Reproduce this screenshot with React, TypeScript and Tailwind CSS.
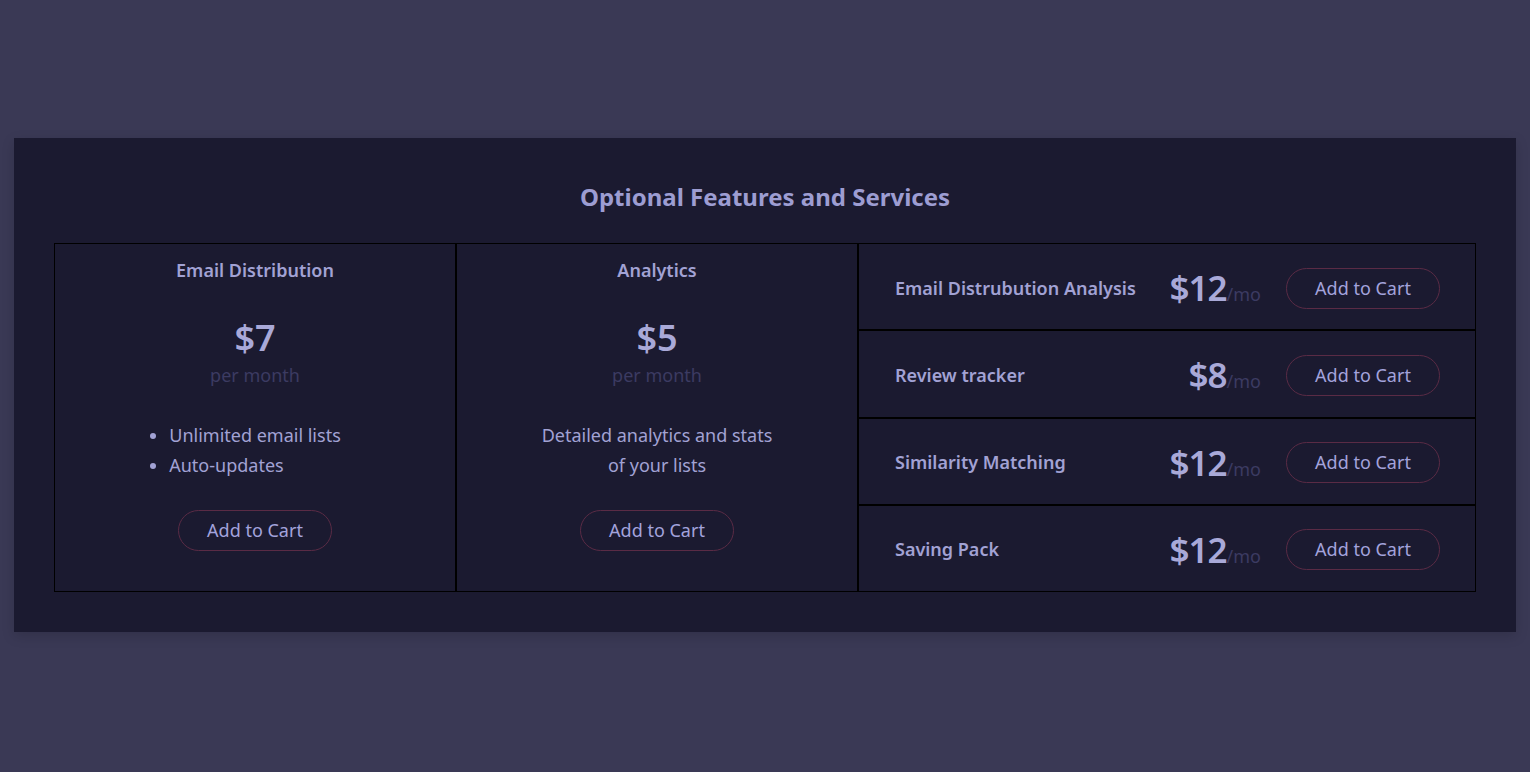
import React from "react";

const font = { fontFamily: '"Noto Sans", "Open Sans", sans-serif' };

function CartButton({ className = "" }: { className?: string }) {
  return (
    <button
      className={`h-[41px] w-[154px] rounded-full border border-[#5a2b45] text-[18px] text-[#a3a3dc] bg-transparent ${className}`}
    >
      Add to Cart
    </button>
  );
}

function Card({ title, price, children }: { title: string; price: string; children: React.ReactNode }) {
  return (
    <div className="flex flex-col items-center border border-black pt-[13px] pb-[40px]">
      <h3 className="text-[18px] font-semibold leading-[26px] text-[#a2a2d4]">{title}</h3>
      <div className="mt-[35px] text-[36px] font-semibold leading-[40px] text-[#a9a9d8]">{price}</div>
      <div className="mt-[5px] text-[18px] leading-[24px] text-[#3c3b62]">per month</div>
      <div className="mt-[33px] h-[60px] text-[18px] leading-[30px] text-[#a2a2d4]">{children}</div>
      <CartButton className="mt-[30px]" />
    </div>
  );
}

function Row({ title, price }: { title: string; price: string }) {
  return (
    <div className="flex h-[87.25px] items-center border border-black pl-[36px] pr-[35px] pt-[3px]">
      <div className="flex-1 text-[18px] font-semibold text-[#a2a2d4]">{title}</div>
      <div className="flex items-baseline">
        <span className="text-[35px] font-semibold leading-[44px] tracking-[-1px] text-[#a9a9d8]">{price}</span>
        <span className="text-[18px] text-[#3c3b62]">/mo</span>
      </div>
      <CartButton className="ml-[25px]" />
    </div>
  );
}

export default function App() {
  return (
    <div className="min-h-[772px] w-full bg-[#3a3955] pt-[138px]" style={font}>
      <div className="mx-[14px] bg-[#1b1a30] px-[40px] pt-[40px] pb-[40px] shadow-[0_4px_12px_rgba(0,0,0,0.15)]">
        <h2 className="text-center text-[24px] font-bold leading-[38px] text-[#9d9dd2]">
          Optional Features and Services
        </h2>
        <div className="mt-[27px] grid grid-cols-[402px_402px_618px]">
          <Card title="Email Distribution" price="$7">
            <ul className="list-disc pl-0 text-left">
              <li>Unlimited email lists</li>
              <li>Auto-updates</li>
            </ul>
          </Card>
          <Card title="Analytics" price="$5">
            <p className="text-center">
              Detailed analytics and stats
              <br />
              of your lists
            </p>
          </Card>
          <div className="flex flex-col">
            <Row title="Email Distrubution Analysis" price="$12" />
            <Row title="Review tracker" price="$8" />
            <Row title="Similarity Matching" price="$12" />
            <Row title="Saving Pack" price="$12" />
          </div>
        </div>
      </div>
    </div>
  );
}
